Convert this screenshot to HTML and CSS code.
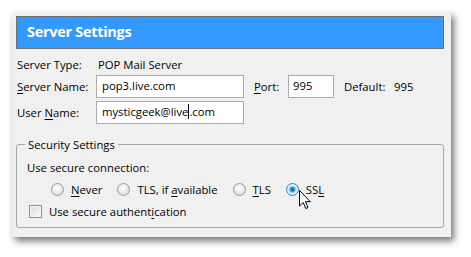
FILE: index.html
```html
<!DOCTYPE html>
<html>
<head>
	<title>Server Settings</title>
	<link rel="stylesheet" href="styles.css">
</head>
<body>
	<div class="dialog">
		<div class="header">Server Settings</div>

		<div class="form">
			<div class="row row-type">
				<span class="label">Server Type:</span>
				<span class="value">POP Mail Server</span>
			</div>
			<div class="row">
				<span class="label"><u>S</u>erver Name:</span>
				<span class="input input-wide">pop3.live.com</span>
				<span class="label-port"><u>P</u>ort:</span>
				<span class="input input-port">995</span>
				<span class="default">Default:</span>
				<span class="default-val">995</span>
			</div>
			<div class="row">
				<span class="label">User <u>N</u>ame:</span>
				<span class="input input-wide">mysticgeek@live<span class="caret"></span>.com</span>
			</div>
		</div>

		<fieldset class="security">
			<legend>Security Settings</legend>
			<div class="sec-line">Use secure connection:</div>
			<div class="radios">
				<span class="radio"><i class="dot"></i><span><u>N</u>ever</span></span>
				<span class="radio"><i class="dot"></i><span>TLS, if <u>a</u>vailable</span></span>
				<span class="radio"><i class="dot"></i><span><u>T</u>LS</span></span>
				<span class="radio"><i class="dot checked"></i><span>SS<u>L</u></span></span>
				<svg class="cursor" width="13" height="20" viewBox="0 0 13 20">
					<path d="M0.5 0.5 L0.5 16 L4.2 12.5 L6.8 18.5 L9 17.6 L6.5 11.7 L11.3 11.7 Z" fill="#fff" stroke="#000" stroke-width="1" stroke-linejoin="miter"/>
				</svg>
			</div>
			<div class="check-line">
				<span class="checkbox"></span><span>Use secure authent<u>i</u>cation</span>
			</div>
		</fieldset>
	</div>
</body>
</html>
```

FILE: styles.css
```css
body{
	margin: 0;
	padding: 12px;
	background: #fff;
	font-family: "Open Sans", "Noto Sans", sans-serif;
	font-size: 11.3px;
	color: #000;
}
u{
	text-decoration: underline;
	text-underline-offset: 2px;
}

.dialog{
	width: 439px;
	height: 225px;
	box-sizing: border-box;
	padding: 4px 0 0 4px;
	background: #f0f0f0;
	box-shadow: 3px 4px 7px rgba(0,0,0,.55);
}

.header{
	width: 428px;
	height: 33px;
	box-sizing: border-box;
	border: 1px solid #707070;
	background: #3399ff;
	color: #fff;
	font-size: 14.5px;
	font-weight: bold;
	letter-spacing: -0.3px;
	line-height: 30px;
	padding-left: 10px;
}

.form{
	padding: 7px 0 0 1px;
}
.row{
	display: flex;
	align-items: center;
	height: 23px;
	margin-bottom: 3px;
}
.row-type{
	height: 16px;
}
.label{
	width: 79px;
}
.value{
	padding-left: 2px;
}
.input{
	height: 23px;
	box-sizing: border-box;
	border: 1px solid #ababab;
	background: #fff;
	line-height: 20px;
	padding-left: 5px;
	position: relative;
}
.input-wide{
	width: 148px;
}
.label-port{
	margin-left: 10px;
	width: 34px;
}
.input-port{
	width: 46px;
	padding-left: 4px;
}
.default{
	margin-left: 10px;
	width: 50px;
}
.caret{
	display: inline-block;
	width: 1px;
	height: 15px;
	background: #000;
	vertical-align: -3px;
}

.security{
	width: 428px;
	height: 91px;
	box-sizing: border-box;
	margin: 13px 0 0 0;
	padding: 0 0 0 10px;
	border: 1px solid #a5a5a5;
	border-radius: 3px;
}
.security legend{
	padding: 0 3px;
	margin-left: -2px;
}
.sec-line{
	margin-top: 8px;
	height: 16px;
	line-height: 16px;
}
.radios{
	display: flex;
	align-items: center;
	height: 22px;
	margin-top: 2px;
	padding-left: 24px;
	position: relative;
}
.radio{
	display: flex;
	align-items: center;
	margin-right: 15px;
}
.dot{
	width: 13px;
	height: 13px;
	box-sizing: border-box;
	border-radius: 50%;
	border: 1px solid #9a9a9a;
	background: radial-gradient(circle at 45% 40%, #fff 0, #f2f2f2 35%, #cfcfcf 100%);
	margin-right: 7px;
}
.dot.checked{
	border-color: #3c7fb1;
	background: radial-gradient(circle, #0a4f98 0, #2b9be8 28%, #7ecbf5 38%, #e6f3fb 55%, #b8d8ee 100%);
}
.cursor{
	position: absolute;
	left: 272px;
	top: 12px;
}
.check-line{
	display: flex;
	align-items: center;
	height: 22px;
	margin-left: 2px;
}
.checkbox{
	width: 13px;
	height: 13px;
	box-sizing: border-box;
	border: 1px solid #8f8f8f;
	background: linear-gradient(135deg, #dcdcdc, #f8f8f8);
	box-shadow: inset 0 0 0 1px #f4f4f4;
	margin-right: 7px;
}
```
